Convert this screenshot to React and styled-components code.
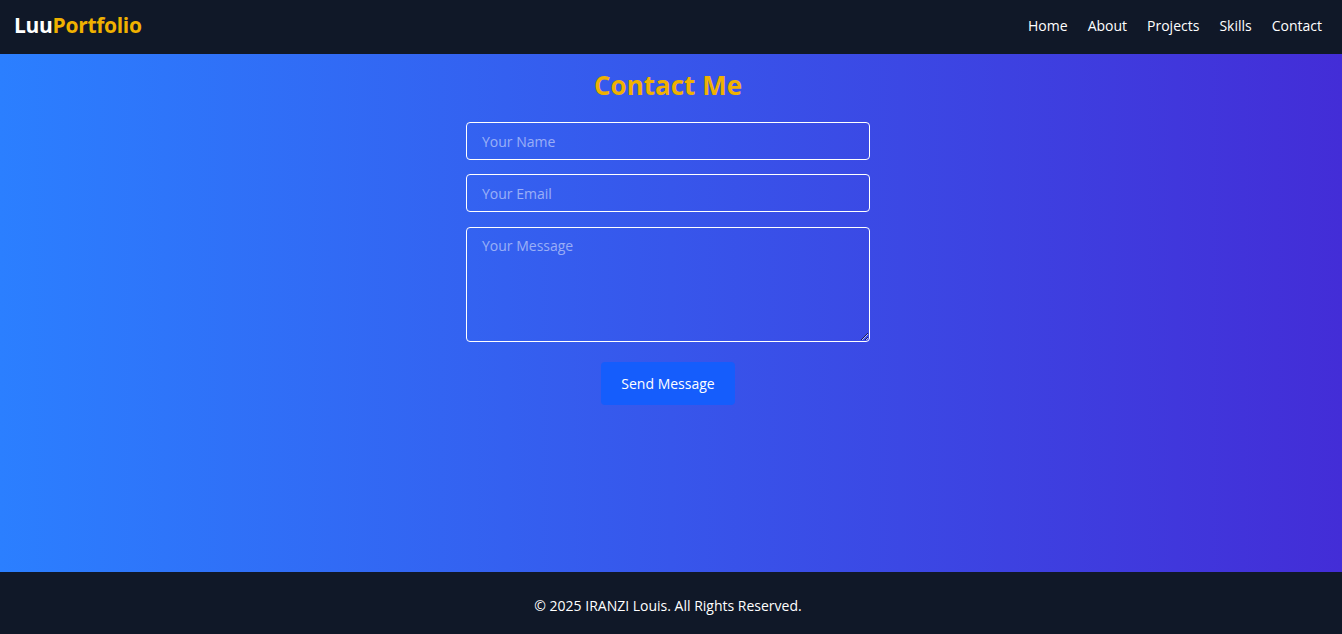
import styled, { createGlobalStyle } from "styled-components";

const GlobalStyle = createGlobalStyle`
  * {
    box-sizing: border-box;
  }
  body {
    margin: 0;
    font-family: "Open Sans", "Noto Sans", sans-serif;
    color: #fff;
  }
`;

const Page = styled.div`
  min-height: 100vh;
  display: flex;
  flex-direction: column;
`;

const Header = styled.header`
  height: 54px;
  display: flex;
  align-items: center;
  justify-content: space-between;
  padding: 0 20px 4px 14px;
  background-color: #101828;
`;

const Logo = styled.div`
  font-size: 21px;
  font-weight: 700;
  letter-spacing: -0.3px;
  color: #fff;

  span {
    color: #f0b100;
  }
`;

const Nav = styled.nav`
  display: flex;
  gap: 20px;
`;

const NavLink = styled.a`
  font-size: 14px;
  font-weight: 500;
  color: #fff;
  text-decoration: none;
  cursor: pointer;
`;

const Main = styled.main`
  flex: 1;
  display: flex;
  flex-direction: column;
  align-items: center;
  padding: 13px 6px 0 0;
  background: linear-gradient(to right, #2b7fff, #432dd7);
`;

const Title = styled.h2`
  margin: 0 0 19px;
  font-size: 26px;
  line-height: 36px;
  font-weight: 700;
  color: #f0b100;
`;

const Form = styled.form`
  width: 404px;
  display: flex;
  flex-direction: column;
  align-items: center;
`;

const Field = styled.input`
  width: 100%;
  height: 38px;
  margin-bottom: ${(p) => p.$gap}px;
  padding: 0 15px;
  border: 1px solid #fff;
  border-radius: 4px;
  background: transparent;
  color: #fff;
  font-family: inherit;
  font-size: 14px;
  outline: none;

  &::placeholder {
    color: rgba(255, 255, 255, 0.5);
  }
`;

const MessageArea = styled.textarea`
  width: 100%;
  height: 115px;
  margin-bottom: 20px;
  padding: 8px 15px;
  border: 1px solid #fff;
  border-radius: 4px;
  background: transparent;
  color: #fff;
  font-family: inherit;
  font-size: 14px;
  line-height: 20px;
  outline: none;

  &::placeholder {
    color: rgba(255, 255, 255, 0.5);
  }
`;

const SendButton = styled.button`
  width: 134px;
  height: 43px;
  border: none;
  border-radius: 4px;
  background-color: #155dfc;
  color: #fff;
  font-family: inherit;
  font-size: 14px;
  cursor: pointer;
`;

const Footer = styled.footer`
  height: 62px;
  display: flex;
  align-items: center;
  justify-content: center;
  padding: 4px 6px 0 0;
  background-color: #101828;
  font-size: 14px;
  color: #fff;
`;

export default function App() {
  return (
    <Page>
      <GlobalStyle />
      <Header>
        <Logo>
          Luu<span>Portfolio</span>
        </Logo>
        <Nav>
          <NavLink>Home</NavLink>
          <NavLink>About</NavLink>
          <NavLink>Projects</NavLink>
          <NavLink>Skills</NavLink>
          <NavLink>Contact</NavLink>
        </Nav>
      </Header>
      <Main>
        <Title>Contact Me</Title>
        <Form onSubmit={(e) => e.preventDefault()}>
          <Field type="text" placeholder="Your Name" $gap={14} />
          <Field type="email" placeholder="Your Email" $gap={15} />
          <MessageArea placeholder="Your Message" />
          <SendButton type="submit">Send Message</SendButton>
        </Form>
      </Main>
      <Footer>© 2025 IRANZI Louis. All Rights Reserved.</Footer>
    </Page>
  );
}
